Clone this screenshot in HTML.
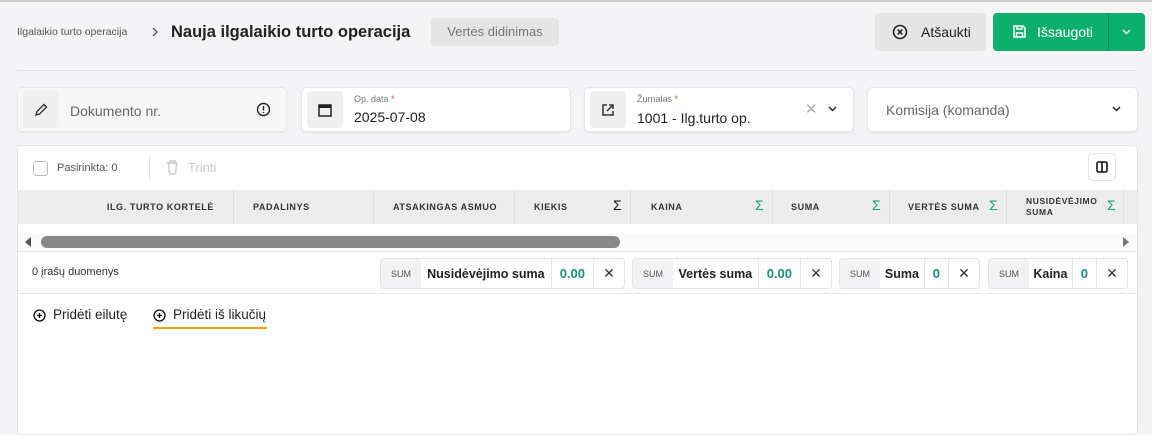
<!DOCTYPE html>
<html><head><meta charset="utf-8"><style>
*{box-sizing:border-box;margin:0;padding:0}
body{width:1152px;height:427px;overflow:hidden;background:#f4f4f6;font-family:"Liberation Sans",sans-serif;color:#222;position:relative}
.a{position:absolute;white-space:nowrap}
.fld{position:absolute;top:87px;height:45px;background:#fff;border:1px solid #e6e6e8;border-radius:5px;box-shadow:0 1px 2px rgba(0,0,0,.06)}
.ib{position:absolute;left:5px;top:3px;width:36px;height:37px;background:#efeff0;border-radius:4px;display:flex;align-items:center;justify-content:center}
.th{position:absolute;top:190px;height:34px;font-size:9px;font-weight:bold;letter-spacing:.6px;color:#333;border-right:1px solid #ddd;display:flex;align-items:center;white-space:nowrap}
.sig{position:absolute;font-size:14px;color:#12a86b}
.chip{position:absolute;top:258px;height:31px;border:1px solid #e3e3e5;border-radius:4px;background:#fff;display:flex;align-items:center;font-size:13px;overflow:hidden;white-space:nowrap}
.chip .s{background:#f2f2f4;height:100%;display:flex;align-items:center;padding:0 10px;font-size:9px;color:#555}
.chip .n{flex:1;text-align:center;font-weight:bold;color:#222;font-size:12.5px}
.chip .v{border-left:1px solid #e3e3e5;border-right:1px solid #e3e3e5;height:100%;display:flex;align-items:center;padding:0 8px;color:#1a8f7a;font-weight:bold}
.chip .x{width:30px;text-align:center;font-size:14px;color:#333}
</style></head><body>
<div class="a" style="left:0;top:0;width:1152px;height:2px;background:#cfcfcf"></div>
<div class="a" style="left:17px;top:26px;font-size:10.5px;color:#555">Ilgalaikio turto operacija</div>
<svg class="a" style="left:151px;top:27px" width="8" height="10" viewBox="0 0 8 10" fill="none" stroke="#555" stroke-width="1.3"><path d="M2 1l4 4-4 4"/></svg>
<div class="a" style="left:171px;top:23px;font-size:16.5px;font-weight:bold;color:#222">Nauja ilgalaikio turto operacija</div>
<div class="a" style="left:431px;top:18px;width:128px;height:28px;background:#e5e5e6;border-radius:4px;font-size:13px;color:#777;text-align:center;line-height:28px">Vertės didinimas</div>
<div class="a" style="left:875px;top:13px;width:111px;height:38px;background:#e6e6e7;border-radius:4px;font-size:14px;line-height:38px;padding-left:46px">Atšaukti</div>
<svg class="a" style="left:892px;top:24px" width="16" height="16" viewBox="0 0 16 16" fill="none" stroke="#222" stroke-width="1.6"><circle cx="8" cy="8" r="6.5"/><path d="M5.6 5.6l4.8 4.8M10.4 5.6l-4.8 4.8"/></svg>
<div class="a" style="left:993px;top:13px;width:152px;height:38px;background:#0daf6c;border-radius:4px"></div>
<div class="a" style="left:1108px;top:13px;width:1px;height:38px;background:#0a8f58"></div>
<svg class="a" style="left:1012px;top:24px" width="15" height="15" viewBox="0 0 15 15" fill="none" stroke="#fff" stroke-width="1.5"><path d="M2 2h9l2 2v9H2z"/><path d="M5 2v3h5V2M4.5 13V9h6v4"/></svg>
<div class="a" style="left:1037px;top:24px;color:#fff;font-size:14px">Išsaugoti</div>
<svg class="a" style="left:1121px;top:28px" width="11" height="8" viewBox="0 0 11 8" fill="none" stroke="#fff" stroke-width="1.3"><path d="M2 2l3.5 3.5L9 2"/></svg>
<div class="a" style="left:17px;top:70px;width:1120px;height:1px;background:#e0e0e2"></div>

<div class="fld" style="left:17px;width:270px;background:#f7f7f8"><div class="ib"><svg width="16" height="16" viewBox="0 0 16 16" fill="none" stroke="#333" stroke-width="1.4"><path d="M3 13l1-3.5L11 2.5l2.5 2.5L6.5 12z"/></svg></div>
<div class="a" style="left:52px;top:15px;font-size:14px;color:#666">Dokumento nr.</div>
<svg class="a" style="left:238px;top:14px" width="15" height="15" viewBox="0 0 15 15" fill="none" stroke="#222" stroke-width="1.4"><circle cx="7.5" cy="7.5" r="6"/><path d="M7.5 4v4.5M7.5 10v1"/></svg></div>
<div class="fld" style="left:301px;width:270px"><div class="ib"><svg width="14" height="14" viewBox="0 0 14 14"><rect x="1" y="2" width="12" height="11" fill="none" stroke="#222" stroke-width="1.5"/><rect x="1" y="2" width="12" height="3" fill="#222"/></svg></div>
<div class="a" style="left:52px;top:6px;font-size:9px;color:#777">Op. data <span style="color:#e44">*</span></div>
<div class="a" style="left:52px;top:21px;font-size:14px">2025-07-08</div></div>
<div class="fld" style="left:584px;width:270px"><div class="ib"><svg width="14" height="14" viewBox="0 0 14 14" fill="none" stroke="#333" stroke-width="1.5"><path d="M6 2H2v10h10V8M8 2h4v4M12 2L6 8"/></svg></div>
<div class="a" style="left:52px;top:6px;font-size:9px;color:#777">Žurnalas <span style="color:#e44">*</span></div>
<div class="a" style="left:52px;top:22px;font-size:14px">1001 - Ilg.turto op.</div>
<div class="a" style="left:220px;top:12px;font-size:15px;color:#aaa">✕</div>
<svg class="a" style="left:242px;top:17px" width="11" height="8" viewBox="0 0 11 8" fill="none" stroke="#222" stroke-width="1.5"><path d="M2 2l3.5 3.5L9 2"/></svg></div>
<div class="fld" style="left:867px;width:271px">
<div class="a" style="left:18px;top:14px;font-size:14px;color:#666">Komisija (komanda)</div>
<svg class="a" style="left:243px;top:17px" width="11" height="8" viewBox="0 0 11 8" fill="none" stroke="#222" stroke-width="1.5"><path d="M2 2l3.5 3.5L9 2"/></svg></div>

<div class="a" style="left:17px;top:145px;width:1121px;height:290px;background:#fff;border:1px solid #e3e3e5;border-radius:5px"></div>
<div class="a" style="left:33px;top:161px;width:15px;height:15px;border:1px solid #bbb;border-radius:3px"></div>
<div class="a" style="left:57px;top:162px;font-size:11px;color:#555">Pasirinkta: 0</div>
<div class="a" style="left:149px;top:156px;width:1px;height:24px;background:#e2e2e2"></div>
<svg class="a" style="left:166px;top:160px" width="13" height="15" viewBox="0 0 13 15" fill="none" stroke="#ccc" stroke-width="1.4"><path d="M1 3h11M4 3V1h5v2M2.5 3l1 11h6l1-11"/></svg>
<div class="a" style="left:188px;top:160px;font-size:13px;color:#ccc">Trinti</div>
<div class="a" style="left:1088px;top:153px;width:28px;height:28px;border:1px solid #e3e3e5;border-radius:5px;display:flex;align-items:center;justify-content:center"><svg width="12" height="12" viewBox="0 0 12 12" fill="none" stroke="#111" stroke-width="1.6"><rect x="1" y="1" width="10" height="10" rx="1.5"/><path d="M6 1v10"/></svg></div>

<div class="a" style="left:18px;top:190px;width:1119px;height:34px;background:#ececed"></div>
<div class="th" style="left:18px;width:216px;justify-content:flex-end;padding-right:19px">ILG. TURTO KORTELĖ</div>
<div class="th" style="left:234px;width:140px;padding-left:19px">PADALINYS</div>
<div class="th" style="left:374px;width:141px;padding-left:19px">ATSAKINGAS ASMUO</div>
<div class="th" style="left:515px;width:116px;padding-left:19px">KIEKIS</div>
<div class="sig" style="left:613px;top:197px;color:#111">Σ</div>
<div class="th" style="left:631px;width:142px;padding-left:20px">KAINA</div>
<div class="sig" style="left:755px;top:197px">Σ</div>
<div class="th" style="left:773px;width:117px;padding-left:18px">SUMA</div>
<div class="sig" style="left:872px;top:197px">Σ</div>
<div class="th" style="left:890px;width:117px;padding-left:18px">VERTĖS SUMA</div>
<div class="sig" style="left:989px;top:197px">Σ</div>
<div class="th" style="left:1007px;width:117px;padding-left:19px;line-height:11px;font-size:8.5px">NUSIDĖVĖJIMO<br>SUMA</div>
<div class="sig" style="left:1107px;top:197px">Σ</div>

<div class="a" style="left:18px;top:233px;width:1119px;height:18px;background:#fafafa"></div>
<svg class="a" style="left:22px;top:236px" width="12" height="12" viewBox="0 0 12 12"><path d="M9 1L3 6l6 5z" fill="#555"/></svg>
<div class="a" style="left:41px;top:236px;width:579px;height:12px;background:#888;border-radius:6px"></div>
<svg class="a" style="left:1120px;top:236px" width="12" height="12" viewBox="0 0 12 12"><path d="M3 1l6 5-6 5z" fill="#777"/></svg>
<div class="a" style="left:18px;top:251px;width:1119px;height:1px;background:#e6e6e6"></div>
<div class="a" style="left:32px;top:266px;font-size:11px;color:#333">0 įrašų duomenys</div>
<div class="chip" style="left:380px;width:245px"><div class="s">SUM</div><div class="n">Nusidėvėjimo suma</div><div class="v">0.00</div><div class="x">✕</div></div>
<div class="chip" style="left:632px;width:200px"><div class="s">SUM</div><div class="n">Vertės suma</div><div class="v">0.00</div><div class="x">✕</div></div>
<div class="chip" style="left:839px;width:141px"><div class="s">SUM</div><div class="n">Suma</div><div class="v">0</div><div class="x">✕</div></div>
<div class="chip" style="left:988px;width:140px"><div class="s">SUM</div><div class="n">Kaina</div><div class="v">0</div><div class="x">✕</div></div>
<div class="a" style="left:18px;top:293px;width:1119px;height:1px;background:#e6e6e6"></div>
<svg class="a" style="left:33px;top:309px" width="13" height="13" viewBox="0 0 13 13" fill="none" stroke="#111" stroke-width="1.3"><circle cx="6.5" cy="6.5" r="5.5"/><path d="M6.5 4v5M4 6.5h5"/></svg>
<div class="a" style="left:53px;top:307px;font-size:13.5px">Pridėti eilutę</div>
<svg class="a" style="left:153px;top:309px" width="13" height="13" viewBox="0 0 13 13" fill="none" stroke="#111" stroke-width="1.3"><circle cx="6.5" cy="6.5" r="5.5"/><path d="M6.5 4v5M4 6.5h5"/></svg>
<div class="a" style="left:173px;top:307px;font-size:13.5px">Pridėti iš likučių</div>
<div class="a" style="left:153px;top:327px;width:114px;height:2px;background:#f5a300"></div>
</body></html>
